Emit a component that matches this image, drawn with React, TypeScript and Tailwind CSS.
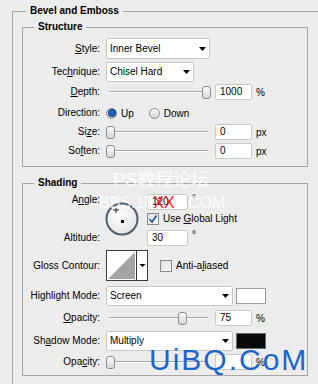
import type { ReactNode } from "react";

const labelCls = "w-[77px] shrink-0 text-right leading-[14px]";

function Arrow() {
    return (
        <svg width="7" height="4" viewBox="0 0 7 4" className="shrink-0">
            <path d="M0 0 H7 L3.5 4 Z" fill="#000" />
        </svg>
    )
}

function Select({ value, className }: { value: string; className: string }) {
    return (
        <div className={`flex items-center justify-between rounded-[2px] border border-[#c6c6c6] bg-white pl-[3px] pr-[3px] ${className}`}>
            <span className="leading-[14px]">{value}</span>
            <Arrow />
        </div>
    )
}

function Field({ value, className = "w-[37px]" }: { value: string; className?: string }) {
    return (
        <div className={`flex h-[16px] items-center rounded-[2px] border border-[#c9c9c9] bg-white pl-[4px] leading-[14px] ${className}`}>
            {value}
        </div>
    )
}

function Slider({ value }: { value: number }) {
    return (
        <div className="relative h-[16px] w-[106px] shrink-0">
            <div className="absolute left-[3px] right-[4px] top-[7px] h-[2px] border-t border-b border-t-[#a8a8a8] border-b-white" />
            <div
                className="absolute top-[2px] h-[13px] w-[9px] rounded-[3px] border border-[#8d8d8d] bg-linear-to-b from-[#fafafa] to-[#d9d9d9]"
                style={{ left: Math.round(4 + 96 * value - 4.5) }}
            />
        </div>
    )
}

function Radio({ checked }: { checked?: boolean }) {
    return (
        <span className="flex h-[11px] w-[11px] shrink-0 items-center justify-center rounded-full border border-[#8a8a8a] bg-linear-to-b from-[#f7f7f7] to-[#d8d8d8]">
            {checked && <span className="h-[6px] w-[6px] rounded-full bg-[#1d64bd] ring-1 ring-[#0d3f80]" />}
        </span>
    )
}

function Checkbox({ checked }: { checked?: boolean }) {
    return (
        <span className="flex h-[12px] w-[12px] shrink-0 items-center justify-center border border-[#8a8a8a] bg-linear-to-br from-[#dedede] to-[#fbfbfb]">
            {checked && (
                <svg width="10" height="10" viewBox="0 0 10 10">
                    <path d="M1.5 5 L4 8 L8.5 1.5" fill="none" stroke="#2a5aa8" strokeWidth="1.8" />
                </svg>
            )}
        </span>
    )
}

function Row({ label, height, className = "", children }: { label: ReactNode; height: string; className?: string; children: ReactNode }) {
    return (
        <div className={`flex items-center ${height} ${className}`}>
            <div className={labelCls}>{label}</div>
            <div className="ml-[6px] flex items-center">{children}</div>
        </div>
    )
}

function Group({ title, className, children }: { title: string; className: string; children: ReactNode }) {
    return (
        <fieldset className={`w-[286px] border border-[#a6a6a6] ${className}`}>
            <legend className="ml-[11px] px-[4px] font-bold leading-[14px]">{title}</legend>
            {children}
        </fieldset>
    )
}

export default function App() {
    return (
        <div className="relative h-[384px] w-[318px] overflow-hidden bg-[#ececec] pt-[4px] text-[10px] text-black font-['Liberation_Sans',Arial,sans-serif]">
            <fieldset className="ml-[12px] w-[330px] border border-[#a6a6a6] pb-[20px]">
                <legend className="ml-[13px] px-[4px] font-bold leading-[14px]">Bevel and Emboss</legend>
                <div className="pl-[9px]">
                    <Group title="Structure" className="mt-[2px] pb-[7px]">
                        <div className="pt-[4px]">
                            <Row label={<><u>S</u>tyle:</>} height="h-[21px]">
                                <Select value="Inner Bevel" className="h-[21px] w-[104px]" />
                            </Row>
                            <Row label={<>Tec<u>h</u>nique:</>} height="h-[20px]" className="mt-[3px]">
                                <Select value="Chisel Hard" className="h-[20px] w-[88px]" />
                            </Row>
                            <Row label={<><u>D</u>epth:</>} height="h-[16px]" className="mt-[2px]">
                                <Slider value={1} />
                                <Field value="1000" className="ml-[3px] w-[37px]" />
                                <span className="ml-[4px]">%</span>
                            </Row>
                            <Row label="Direction:" height="h-[16px]" className="mt-[5px]">
                                <Radio checked />
                                <span className="ml-[4px]">Up</span>
                                <span className="ml-[15px]"><Radio /></span>
                                <span className="ml-[4px]">Down</span>
                            </Row>
                            <Row label={<>Si<u>z</u>e:</>} height="h-[16px]" className="mt-[3px]">
                                <Slider value={0} />
                                <Field value="0" className="ml-[3px] w-[37px]" />
                                <span className="ml-[4px]">px</span>
                            </Row>
                            <Row label={<>So<u>f</u>ten:</>} height="h-[16px]" className="mt-[3px]">
                                <Slider value={0} />
                                <Field value="0" className="ml-[3px] w-[37px]" />
                                <span className="ml-[4px]">px</span>
                            </Row>
                        </div>
                    </Group>

                    <Group title="Shading" className="mt-[9px] pb-[5px]">
                        <div className="pt-[3px]">
                            <div className="flex h-[53px]">
                                <div className={`${labelCls} flex h-[53px] flex-col items-end`}>
                                    <span>A<u>n</u>gle:</span>
                                    <span className="mt-[24px]">Altitude:</span>
                                </div>
                                <svg width="34" height="34" viewBox="0 0 34 34" className="ml-[5px] mt-[9px] shrink-0">
                                    <defs>
                                        <radialGradient id="dial" cx="0.4" cy="0.35" r="0.7">
                                            <stop offset="0" stopColor="#ffffff" />
                                            <stop offset="1" stopColor="#e2e2e2" />
                                        </radialGradient>
                                    </defs>
                                    <circle cx="17" cy="17" r="15.5" fill="url(#dial)" stroke="#4f5d72" strokeWidth="2" />
                                    <path d="M11 5 V11 M8 8 H14" stroke="#222" strokeWidth="1" />
                                    <rect x="16" y="18" width="3" height="3" fill="#000" />
                                </svg>
                                <div className="ml-[8px] flex flex-col">
                                    <div className="mt-[1px] flex items-start">
                                        <Field value="120" className="w-[41px]" />
                                        <span className="ml-[4px] leading-[10px]">°</span>
                                    </div>
                                    <div className="mt-[3px] flex h-[12px] items-center">
                                        <Checkbox checked />
                                        <span className="ml-[4px] leading-[12px]">Use <u>G</u>lobal Light</span>
                                    </div>
                                    <div className="mt-[5px] flex items-start">
                                        <Field value="30" className="w-[41px]" />
                                        <span className="ml-[4px] leading-[10px]">°</span>
                                    </div>
                                </div>
                            </div>

                            <Row label="Gloss Contour:" height="h-[31px]" className="mt-[4px]">
                                <svg width="42" height="31" viewBox="0 0 42 31" className="shrink-0">
                                    <rect x="0.5" y="0.5" width="41" height="30" fill="#fff" stroke="#3a3a3a" />
                                    <path d="M2 29 L29 2 L29 29 Z" fill="#a3a3a3" />
                                    <line x1="30.5" y1="0.5" x2="30.5" y2="30.5" stroke="#3a3a3a" />
                                    <path d="M33.5 14 H39.5 L36.5 17 Z" fill="#000" />
                                </svg>
                                <span className="ml-[12px]"><Checkbox /></span>
                                <span className="ml-[4px]">Anti-a<u>l</u>iased</span>
                            </Row>

                            <Row label="Highlight Mode:" height="h-[20px]" className="mt-[5px]">
                                <Select value="Screen" className="h-[20px] w-[127px]" />
                                <div className="ml-[3px] h-[16px] w-[30px] border border-[#9a9a9a] bg-white" />
                            </Row>
                            <Row label={<><u>O</u>pacity:</>} height="h-[16px]" className="mt-[4px]">
                                <Slider value={0.75} />
                                <Field value="75" className="ml-[3px] w-[37px]" />
                                <span className="ml-[4px]">%</span>
                            </Row>
                            <Row label={<>Sh<u>a</u>dow Mode:</>} height="h-[20px]" className="mt-[5px]">
                                <Select value="Multiply" className="h-[20px] w-[127px]" />
                                <div className="ml-[3px] h-[16px] w-[30px] border border-[#6a6a6a] bg-[#0a0a0a]" />
                            </Row>
                            <Row label={<>Opa<u>c</u>ity:</>} height="h-[16px]" className="mt-[3px]">
                                <Slider value={0} />
                                <Field value="" className="ml-[3px] w-[37px]" />
                                <span className="ml-[4px]">%</span>
                            </Row>
                        </div>
                    </Group>
                </div>
            </fieldset>

            {/* watermarks laid over the dialog */}
            <div className="pointer-events-none absolute left-[113px] top-[171px] text-[18px] leading-none text-white/80 font-['Liberation_Sans','Noto_Sans_CJK_SC',sans-serif]">
                PS教程论坛
            </div>
            <div className="pointer-events-none absolute left-[99px] top-[195px] text-[16px] leading-none text-white/80">
                BBS.16<span className="text-[#ee1c1c]">XX</span>8.COM
            </div>
            <div className="pointer-events-none absolute left-[149px] top-[345px] text-[30px] leading-none tracking-[2px] text-[#1a66cc]">
                UiBQ.CoM
            </div>
        </div>
    )
}
